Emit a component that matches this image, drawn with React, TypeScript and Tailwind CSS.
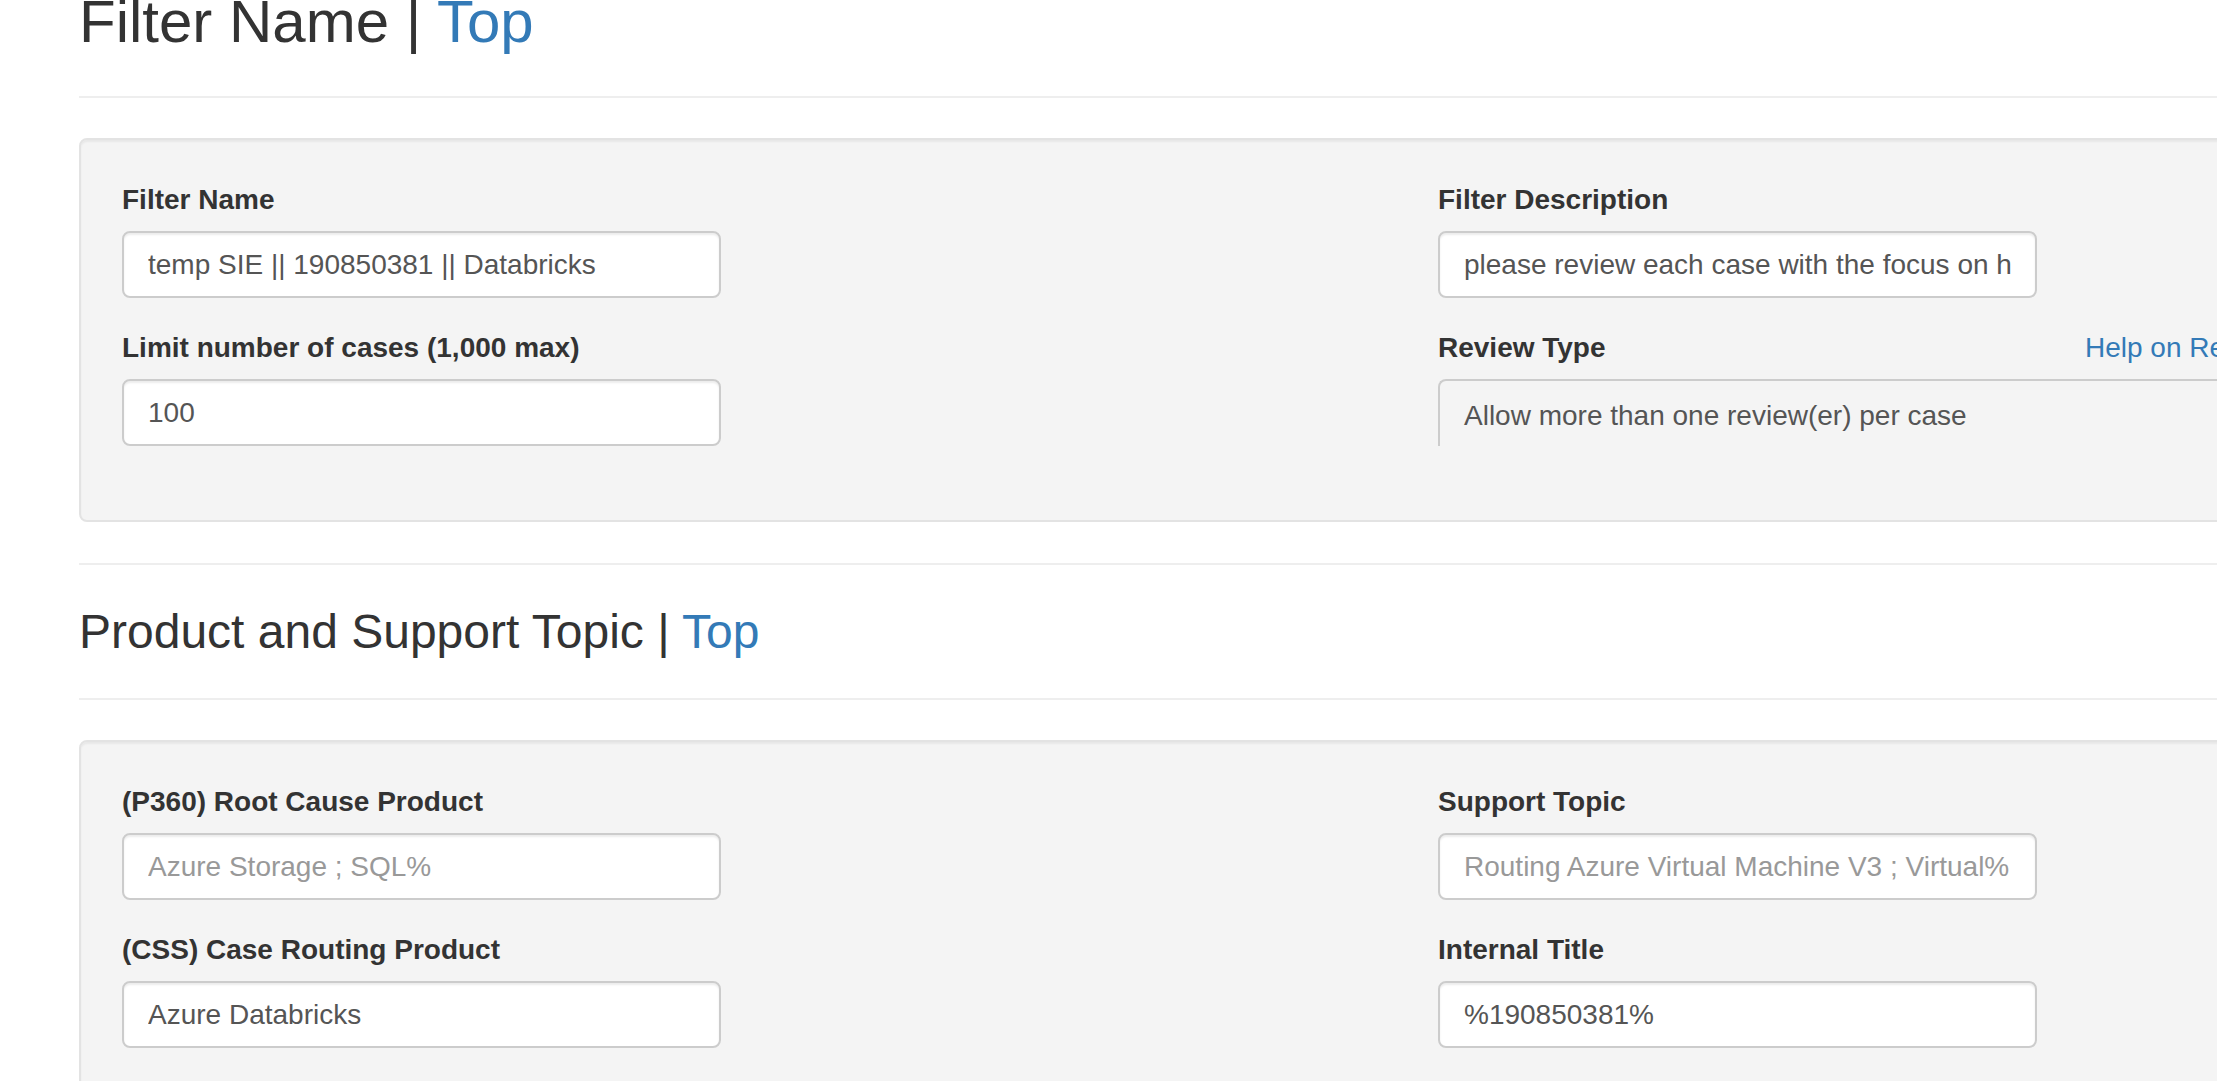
import React from "react";

const font = { fontFamily: '"Liberation Sans", Arial, Helvetica, sans-serif' };

interface FieldProps {
  label: string;
  value?: string;
  placeholder?: string;
}

function Field({ label, value, placeholder }: FieldProps) {
  return (
    <div className="mb-[30px]">
      <label className="block text-[28px] font-bold leading-[40px] text-[#333] mb-[11px]">{label}</label>
      <input
        readOnly
        defaultValue={value}
        placeholder={placeholder}
        className="block h-[67px] w-[599px] px-[24px] border-2 border-[#ccc] rounded-[8px] bg-white text-[28px] text-[#555] placeholder:text-[#999] shadow-[inset_0_2px_2px_rgba(0,0,0,0.075)] outline-none"
      />
    </div>
  );
}

function Panel({ children }: { children: React.ReactNode }) {
  return (
    <div className="grid grid-cols-[1316px_1fr] bg-[#f4f4f4] border-2 border-[#e3e3e3] rounded-[8px] pt-[40px] pb-[44px] px-[41px] shadow-[inset_0_2px_2px_rgba(0,0,0,0.05)]">
      {children}
    </div>
  );
}

export default function App() {
  return (
    <div className="h-[1081px] w-full overflow-hidden bg-white" style={font}>
      <div className="w-[2720px] pl-[79px]">
        <div className="mt-[-11px] pb-[41px] border-b-2 border-[#eee]">
          <h2 className="text-[60px] leading-[66px] font-normal text-[#333]">
            Filter Name | <a className="text-[#337ab7]">Top</a>
          </h2>
        </div>

        <div className="mt-[40px] mb-[41px]">
          <Panel>
            <div>
              <Field label="Filter Name" value="temp SIE || 190850381 || Databricks" />
              <Field label="Limit number of cases (1,000 max)" value="100" />
            </div>
            <div>
              <Field
                label="Filter Description"
                value="please review each case with the focus on how the customer experience could be improved"
              />
              <div className="mb-[30px]">
                <div className="flex mb-[11px]">
                  <label className="w-[647px] text-[28px] font-bold leading-[40px] text-[#333]">Review Type</label>
                  <a className="text-[28px] leading-[40px] text-[#337ab7]">Help on Review Type</a>
                </div>
                <div className="h-[67px] w-[1290px] border-t-2 border-l-2 border-[#ccc] rounded-tl-[8px] pl-[24px] pt-[18px] text-[28px] leading-[34px] text-[#555]">
                  Allow more than one review(er) per case
                </div>
              </div>
            </div>
          </Panel>
        </div>

        <div className="border-t-2 border-[#eee]" />

        <div className="mt-[40px] pb-[40px] border-b-2 border-[#eee]">
          <h3 className="text-[48px] leading-[53px] font-normal text-[#333]">
            Product and Support Topic | <a className="text-[#337ab7]">Top</a>
          </h3>
        </div>

        <div className="mt-[40px]">
          <Panel>
            <div>
              <Field label="(P360) Root Cause Product" placeholder="Azure Storage ; SQL%" />
              <Field label="(CSS) Case Routing Product" value="Azure Databricks" />
            </div>
            <div>
              <Field label="Support Topic" placeholder="Routing Azure Virtual Machine V3 ; Virtual%" />
              <Field label="Internal Title" value="%190850381%" />
            </div>
          </Panel>
        </div>
      </div>
    </div>
  );
}
